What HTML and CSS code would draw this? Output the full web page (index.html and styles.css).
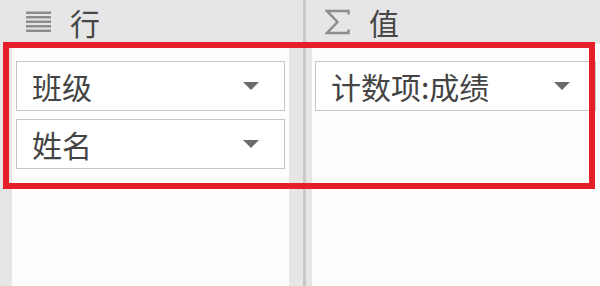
FILE: index.html
```html
<!DOCTYPE html>
<html lang="zh-CN">

<head>
    <meta charset="UTF-8">
    <meta name="viewport" content="width=device-width, initial-scale=1.0">
    <title>数据透视表字段</title>
    <link rel="stylesheet" href="styles.css">
</head>

<body>
    <div class="panes">
        <div class="pane pane-rows">
            <div class="pane-head">
                <svg class="head-icon" width="25" height="22" viewBox="0 0 25 22">
                    <rect x="0" y="0.5" width="25" height="2.5" />
                    <rect x="0" y="5" width="25" height="2.5" />
                    <rect x="0" y="9.5" width="25" height="2.5" />
                    <rect x="0" y="14" width="25" height="2.5" />
                    <rect x="0" y="18.5" width="25" height="2.5" />
                </svg>
                <span class="head-title">行</span>
            </div>
            <div class="field-list">
                <div class="field"><span>班级</span><i class="caret"></i></div>
                <div class="field"><span>姓名</span><i class="caret"></i></div>
            </div>
        </div>

        <div class="divider"></div>

        <div class="pane pane-values">
            <div class="pane-head">
                <svg class="head-icon" width="25" height="26" viewBox="0 0 25 26">
                    <path d="M23.5 5.5 V2 H2 L12.5 13 L2 24 H23.5 V20.5" />
                </svg>
                <span class="head-title">值</span>
            </div>
            <div class="field-list">
                <div class="field"><span>计数项:成绩</span><i class="caret"></i></div>
            </div>
        </div>
    </div>

    <!-- red highlight drawn over both panes -->
    <div class="highlight"></div>
</body>

</html>
```

FILE: styles.css
```css
body {
    margin: 0;
    width: 600px;
    height: 286px;
    overflow: hidden;
    position: relative;
    background-color: #e6e6e6;
    font-family: "Noto Sans CJK SC", "Microsoft YaHei", sans-serif;
}

.panes {
    display: flex;
    height: 286px;
}

.pane {
    display: flex;
    flex-direction: column;
    box-sizing: border-box;
}

.pane-rows {
    width: 303px;
    padding: 0 14px 0 12px;
}

.pane-values {
    flex: 1;
    padding-left: 6px;
}

.divider {
    width: 3px;
    background-color: #c9c9c9;
}

/* Header with icon + title */
.pane-head {
    height: 44px;
    display: flex;
    align-items: center;
    gap: 19px;
    flex-shrink: 0;
}

.pane-rows .pane-head {
    padding-left: 14px;
}

.pane-values .pane-head {
    padding-left: 13px;
}

.head-icon {
    fill: #8c8c8c;
}

.pane-values .head-icon {
    fill: none;
    stroke: #8c8c8c;
    stroke-width: 2.4;
    stroke-linejoin: miter;
}

.head-title {
    font-size: 30px;
    line-height: 1;
    color: #474747;
}

/* White drop area */
.field-list {
    flex: 1;
    background-color: #fdfdfd;
    padding: 17px 4px 0 4px;
}

.pane-values .field-list {
    padding-left: 3px;
}

.field {
    height: 50px;
    box-sizing: border-box;
    margin-bottom: 8px;
    padding: 0 25px 0 15px;
    border: 1px solid #c6c6c6;
    background-color: #ffffff;
    display: flex;
    align-items: center;
    justify-content: space-between;
    font-size: 30px;
    color: #444444;
}

.caret {
    width: 0;
    height: 0;
    border-left: 8px solid transparent;
    border-right: 8px solid transparent;
    border-top: 8px solid #6b6b6b;
}

/* Annotation frame */
.highlight {
    position: absolute;
    left: 3px;
    top: 42px;
    width: 592px;
    height: 147px;
    box-sizing: border-box;
    border: 6px solid #e61e2a;
}
```
